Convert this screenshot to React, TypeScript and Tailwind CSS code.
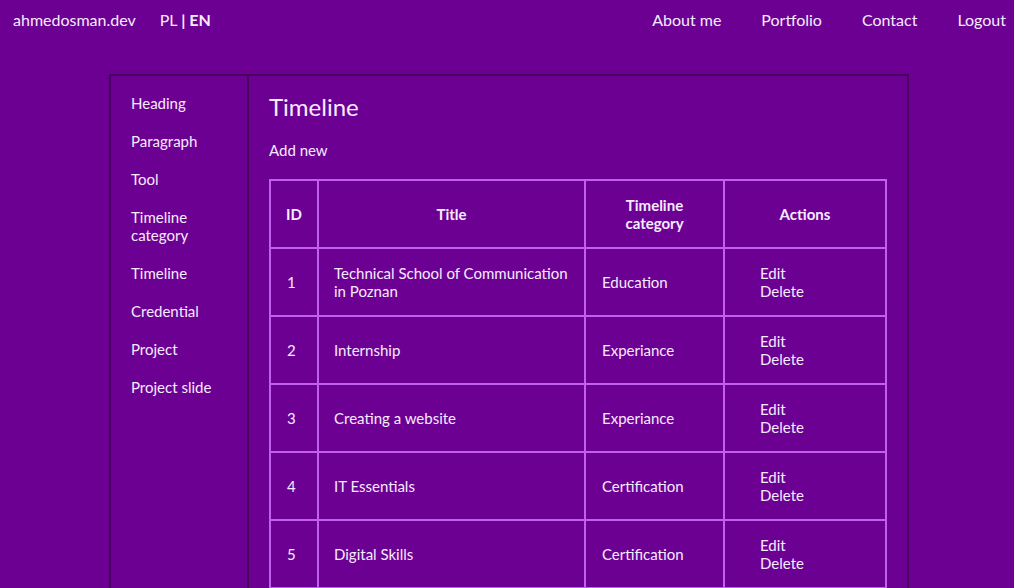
import React from "react";

const sideItems = ["Heading", "Paragraph", "Tool", "Timeline category", "Timeline", "Credential", "Project", "Project slide"];

const rows = [
    { id: 1, title: "Technical School of Communication in Poznan", category: "Education" },
    { id: 2, title: "Internship", category: "Experiance" },
    { id: 3, title: "Creating a website", category: "Experiance" },
    { id: 4, title: "IT Essentials", category: "Certification" },
    { id: 5, title: "Digital Skills", category: "Certification" },
];

function NavBar() {
    return (
        <div className="flex h-10 items-center justify-between pl-[13px] pr-2 text-[16px]">
            <div className="flex items-center">
                <span>ahmedosman.dev</span>
                <span className="ml-[24px]">
                    PL <span className="font-bold">| EN</span>
                </span>
            </div>
            <div className="flex items-center gap-10">
                <span>About me</span>
                <span>Portfolio</span>
                <span>Contact</span>
                <span>Logout</span>
            </div>
        </div>
    );
}

function App() {
    return (
        <div
            className="min-h-[588px] bg-[#6c0092] text-[#f6ebff]"
            style={{ fontFamily: "Lato, 'Open Sans', sans-serif" }}
        >
            <NavBar />

            <div className="mx-auto mt-[34px] flex w-[800px] translate-x-[2px] border-2 border-[#48005f]">
                {/* Sidebar */}
                <div className="w-[138px] shrink-0 border-r-2 border-[#48005f] pl-5 pr-3 pt-[18px]">
                    <ul className="flex flex-col gap-5 text-[15px] leading-[18px]">
                        {sideItems.map((item) => (
                            <li key={item}>{item}</li>
                        ))}
                    </ul>
                </div>

                {/* Main */}
                <div className="flex-1 px-5 pt-[17px]">
                    <h1 className="text-[24px] leading-[28px]">Timeline</h1>
                    <p className="mt-[20px] text-[15px] leading-[18px]">Add new</p>

                    <table className="mt-[20px] w-full table-fixed border-collapse border-2 border-[#c25ff2] text-[15px] leading-[18px]">
                        <colgroup>
                            <col className="w-[48px]" />
                            <col className="w-[267px]" />
                            <col className="w-[139px]" />
                            <col />
                        </colgroup>
                        <thead>
                            <tr className="h-[68px]">
                                <th className="border-2 border-[#c25ff2] px-2 font-bold">ID</th>
                                <th className="border-2 border-[#c25ff2] px-4 font-bold">Title</th>
                                <th className="border-2 border-[#c25ff2] px-4 font-bold">
                                    Timeline
                                    <br />
                                    category
                                </th>
                                <th className="border-2 border-[#c25ff2] px-4 font-bold">Actions</th>
                            </tr>
                        </thead>
                        <tbody>
                            {rows.map((row) => (
                                <tr key={row.id} className="h-[68px]">
                                    <td className="border-2 border-[#c25ff2] pl-4">{row.id}</td>
                                    <td className="border-2 border-[#c25ff2] pl-[15px] pr-3">{row.title}</td>
                                    <td className="border-2 border-[#c25ff2] pl-4">{row.category}</td>
                                    <td className="border-2 border-[#c25ff2] pl-[35px]">
                                        <div>Edit</div>
                                        <div>Delete</div>
                                    </td>
                                </tr>
                            ))}
                        </tbody>
                    </table>
                </div>
            </div>
        </div>
    );
}

export default App;
